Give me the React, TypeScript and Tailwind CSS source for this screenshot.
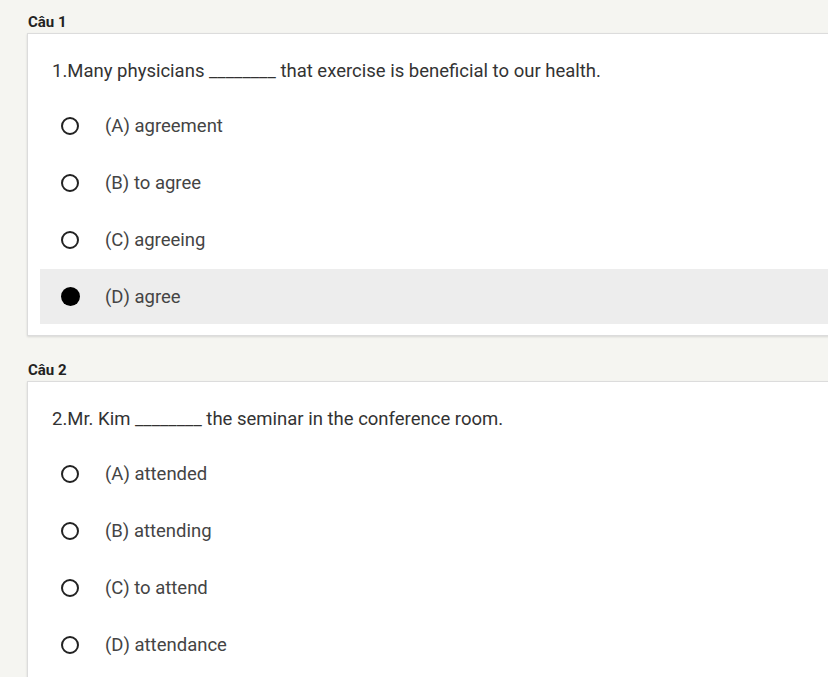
import React from 'react';

type Question = {
  label: string;
  text: string;
  options: string[];
  selected?: number;
};

const QUESTIONS: Question[] = [
  {
    label: 'Câu 1',
    text: '1.Many physicians ________ that exercise is beneficial to our health.',
    options: ['(A) agreement', '(B) to agree', '(C) agreeing', '(D) agree'],
    selected: 3,
  },
  {
    label: 'Câu 2',
    text: '2.Mr. Kim ________ the seminar in the conference room.',
    options: ['(A) attended', '(B) attending', '(C) to attend', '(D) attendance'],
  },
];

function Radio({ checked }: { checked: boolean }) {
  if (checked) {
    return <span className="block h-[19px] w-[19px] rounded-full bg-black" />;
  }
  return <span className="block h-[18px] w-[18px] rounded-full border-2 border-[#222]" />;
}

function QuestionCard({ q }: { q: Question }) {
  return (
    <div>
      <div className="pl-[28px] text-[15px] font-bold leading-[18px] text-[#222]">{q.label}</div>
      <div className="ml-[27px] -mr-10 mt-[2px] border border-[#dcdcdc] bg-white pb-[11px] shadow-[0_1px_2px_rgba(0,0,0,0.12)]">
        <p className="pl-[24px] pt-[26px] text-[18.5px] leading-[22px] text-[#333]">{q.text}</p>
        <div className="mt-[16px] flex flex-col gap-[2px] pl-[12px]">
          {q.options.map((opt, i) => (
            <div
              key={opt}
              className={`flex h-[55px] items-center ${i === q.selected ? 'bg-[#ededed]' : ''}`}
            >
              <div className="flex w-[60px] justify-center">
                <Radio checked={i === q.selected} />
              </div>
              <span className="pl-[5px] text-[18.5px] leading-[22px] text-[#444]">{opt}</span>
            </div>
          ))}
        </div>
      </div>
    </div>
  );
}

export default function App() {
  return (
    <div
      className="min-h-screen overflow-hidden bg-[#f5f5f1] pt-[13px]"
      style={{ fontFamily: 'Roboto, "Liberation Sans", sans-serif' }}
    >
      <div className="flex flex-col gap-[25px]">
        {QUESTIONS.map((q) => (
          <QuestionCard key={q.label} q={q} />
        ))}
      </div>
    </div>
  );
}
